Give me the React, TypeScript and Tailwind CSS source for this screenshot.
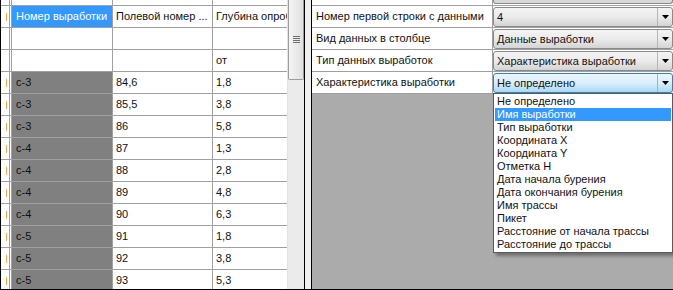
import React from "react";

const rows: [string, string, string][] = [
  ["c-3", "84,6", "1,8"],
  ["c-3", "85,5", "3,8"],
  ["c-3", "86", "5,8"],
  ["c-4", "87", "1,3"],
  ["c-4", "88", "2,8"],
  ["c-4", "89", "4,8"],
  ["c-4", "90", "6,3"],
  ["c-5", "91", "1,8"],
  ["c-5", "92", "3,8"],
  ["c-5", "93", "5,3"],
];

const options = [
  "Не определено",
  "Имя выработки",
  "Тип выработки",
  "Координата X",
  "Координата Y",
  "Отметка H",
  "Дата начала бурения",
  "Дата окончания бурения",
  "Имя трассы",
  "Пикет",
  "Расстояние от начала трассы",
  "Расстояние до трассы",
];

function RowHeader({ mark }: { mark: boolean }) {
  return (
    <div className="flex w-[11px] shrink-0 border-r border-[#a0a0a0]">
      <div className="w-[5px]" />
      <div className="flex w-[1px] items-center">
        {mark && <div className="h-[8px] w-[1px] bg-[#f2a64a]" />}
      </div>
      <div className="w-[2px]" />
      <div className="w-[1px] bg-[#a0a0a0]" />
      <div className="w-[1px]" />
    </div>
  );
}

function GridRow({
  h,
  mark,
  c1,
  c2,
  c3,
  c1cls,
  c2cls,
}: {
  h: string;
  mark: boolean;
  c1?: string;
  c2?: string;
  c3?: string;
  c1cls: string;
  c2cls?: string;
}) {
  return (
    <div className={`flex ${h} shrink-0 border-b border-[#a0a0a0]`}>
      <RowHeader mark={mark} />
      <div className={`flex w-[101px] shrink-0 items-center overflow-hidden whitespace-nowrap border-r border-[#a0a0a0] pl-[4px] ${c1cls}`}>
        {c1}
      </div>
      <div className={`flex w-[100px] shrink-0 items-center overflow-hidden whitespace-nowrap border-r border-[#a0a0a0] pl-[3px] ${c2cls ?? ""}`}>
        {c2}
      </div>
      <div className="flex w-[74px] shrink-0 items-center overflow-hidden whitespace-nowrap pl-[3px]">{c3}</div>
    </div>
  );
}

function Arrow() {
  return (
    <svg width="7" height="4" viewBox="0 0 7 4">
      <path d="M0 0 H7 L3.5 4 Z" fill="#000" />
    </svg>
  );
}

function Combo({ text, active }: { text: string; active?: boolean }) {
  return (
    <div
      className={`flex h-[20px] items-center rounded-[3px] border ${
        active
          ? "border-[#3c7fb1] bg-gradient-to-b from-[#eaf6fd] via-[#d9effc] to-[#a8d9f6]"
          : "border-[#8a8a8a] bg-gradient-to-b from-[#f4f4f4] via-[#ebebeb] to-[#d4d4d4]"
      }`}
    >
      <div className="flex-1 overflow-hidden whitespace-nowrap pl-[3px]">{text}</div>
      <div className={`flex h-full w-[15px] items-center justify-center border-l ${active ? "border-[#8fb9d8]" : "border-[#b5b5b5]"}`}>
        <Arrow />
      </div>
    </div>
  );
}

function PropRow({ label, value, active }: { label: string; value: string; active?: boolean }) {
  return (
    <div className="flex h-[22px] shrink-0 border-b border-[#a0a0a0] bg-white">
      <div className="flex w-[181px] shrink-0 items-center whitespace-nowrap border-r border-[#a0a0a0] pl-[4px]">{label}</div>
      <div className="flex-1 pt-[1px]">
        <Combo text={value} active={active} />
      </div>
    </div>
  );
}

export default function App() {
  return (
    <div className="relative flex h-[290px] w-[673px] overflow-hidden border-b border-l border-black bg-white font-['Liberation_Sans',Arial,sans-serif] text-[11px] text-[#111]">
      {/* Left grid */}
      <div className="flex w-[286px] shrink-0 flex-col overflow-hidden">
        <GridRow h="h-[6px]" mark={false} c1cls="" />
        <GridRow
          h="h-[22px]"
          mark={true}
          c1="Номер выработки"
          c2="Полевой номер ..."
          c3="Глубина опроб"
          c1cls="bg-[#3399ff] text-white"
        />
        <GridRow h="h-[22px]" mark={false} c1cls="" />
        <GridRow h="h-[22px]" mark={false} c3="от" c1cls="" />
        {rows.map((r, i) => (
          <GridRow key={i} h="h-[22px]" mark={true} c1={r[0]} c2={r[1]} c3={r[2]} c1cls="bg-[#808080] text-[#111]" />
        ))}
      </div>

      {/* Scrollbar */}
      <div className="flex w-[17px] shrink-0 flex-col border-l border-[#e2e2e2] bg-[#ebebeb]">
        <div className="mx-[0px] flex h-[80px] flex-col items-center justify-center gap-[1px] rounded-b-[2px] border border-t-0 border-[#9c9c9c] bg-gradient-to-r from-[#f4f4f4] to-[#e0e0e0]">
          <div className="h-[1px] w-[7px] bg-[#6f6f6f]" />
          <div className="h-[1px] w-[7px] bg-[#6f6f6f]" />
          <div className="h-[1px] w-[7px] bg-[#6f6f6f]" />
          <div className="h-[1px] w-[7px] bg-[#6f6f6f]" />
        </div>
      </div>

      {/* Splitter */}
      <div className="w-[8px] shrink-0 border-l border-r border-black bg-[#f0f0f0]" />

      {/* Right property grid */}
      <div className="flex flex-1 flex-col bg-[#ababab]">
        <div className="flex h-[6px] shrink-0 border-b border-[#a0a0a0] bg-white">
          <div className="w-[181px] shrink-0 border-r border-[#a0a0a0]" />
          <div className="flex-1">
            <div className="h-[4px] rounded-b-[3px] border-x border-b border-[#8a8a8a] bg-[#d8d8d8]" />
          </div>
        </div>
        <PropRow label="Номер первой строки с данными" value="4" />
        <PropRow label="Вид данных в столбце" value="Данные выработки" />
        <PropRow label="Тип данных выработок" value="Характеристика выработки" />
        <PropRow label="Характеристика выработки" value="Не определено" active />
      </div>

      {/* Dropdown list */}
      <div className="absolute left-[492px] top-[93px] w-[180px] border border-[#5a5a5a] bg-white px-[1px] pb-[1px] pt-[1px] shadow-[3px_3px_3px_rgba(0,0,0,0.35)]">
        {options.map((o, i) => (
          <div
            key={o}
            className={`h-[13px] whitespace-nowrap pl-[2px] leading-[13px] ${i === 1 ? "bg-[#3399ff] text-white" : ""}`}
          >
            {o}
          </div>
        ))}
      </div>
    </div>
  );
}
